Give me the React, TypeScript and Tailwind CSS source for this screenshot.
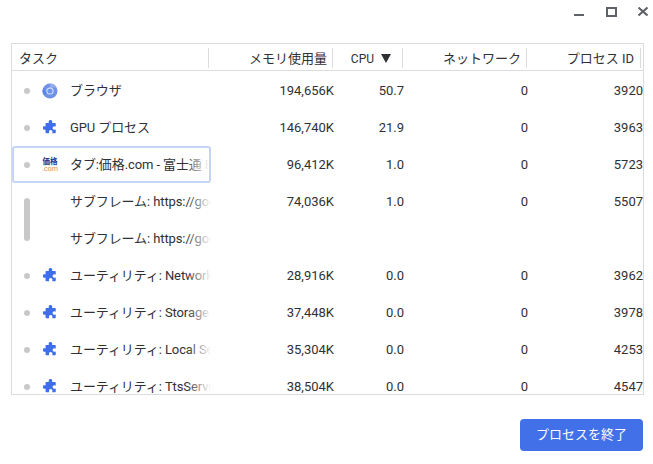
const font = { fontFamily: '"Roboto","Noto Sans CJK JP",sans-serif' };

function Puzzle() {
  return (
    <svg width="15" height="15" viewBox="0 0 16 16" className="ml-[1px] block">
      <path fill="#3f6fe8" d="M6 1.6a2 2 0 0 1 3.9 0c0 .5-.2.9-.2 1.5h3.2c.4 0 .7.3.7.7V7c-.6 0-1-.3-1.500-.3a1.900 1.900 0 0 0 0 3.800c.5 0 .9-.2 1.500-.3v3.200c0 .4-.3.7-.7.7H9.800c0-.6.3-1 .3-1.500a1.900 1.900 0 0 0-3.800 0c0 .5.2.9.3 1.500H3.400c-.4 0-.7-.3-.7-.7V10.300c-.5 0-.9.2-1.300.1a1.900 1.900 0 0 1 0-3.800c.4 0 .8.200 1.300.2V3.800c0-.4.3-.7.7-.7h2.800C6.200 2.500 6 2.100 6 1.600z" />
    </svg>
  );
}

function Chrome() {
  return (
    <svg width="16" height="16" viewBox="0 0 16 16" className="block">
      <circle cx="8" cy="8" r="7.500" fill="#6f92e8" />
      <path d="M8 .5A7.500 7.500 0 0 1 14.600 4.500H8z" fill="#93adec" />
      <path d="M1.500 4.500 5 10.500 2 12.500A7.500 7.500 0 0 1 1.500 4.500z" fill="#5f86e6" />
      <circle cx="8" cy="8" r="3.600" fill="#dfe7fa" />
      <circle cx="8" cy="8" r="2.600" fill="#6f94e8" />
    </svg>
  );
}

function Kakaku() {
  return (
    <div className="flex w-4 flex-col items-center leading-none">
      <span className="text-[7.500px] font-bold leading-[8px] text-[#2a3088]">価格</span>
      <span className="text-[7px] leading-[6px] text-[#d98a4a]">.com</span>
    </div>
  );
}

type Row = { icon: "chrome" | "puzzle" | "kakaku" | null; name: string; mem: string; cpu: string; net: string; pid: string; focus?: boolean };

const rows: Row[] = [
  { icon: "chrome", name: "ブラウザ", mem: "194,656K", cpu: "50.7", net: "0", pid: "3920" },
  { icon: "puzzle", name: "GPU プロセス", mem: "146,740K", cpu: "21.9", net: "0", pid: "3963" },
  { icon: "kakaku", name: "タブ:価格.com - 富士通 FMV", mem: "96,412K", cpu: "1.0", net: "0", pid: "5723", focus: true },
  { icon: null, name: "サブフレーム: https://google.com", mem: "74,036K", cpu: "1.0", net: "0", pid: "5507" },
  { icon: null, name: "サブフレーム: https://google.com", mem: "", cpu: "", net: "", pid: "" },
  { icon: "puzzle", name: "ユーティリティ: Network Service", mem: "28,916K", cpu: "0.0", net: "0", pid: "3962" },
  { icon: "puzzle", name: "ユーティリティ: Storage Service", mem: "37,448K", cpu: "0.0", net: "0", pid: "3978" },
  { icon: "puzzle", name: "ユーティリティ: Local Service", mem: "35,304K", cpu: "0.0", net: "0", pid: "4253" },
  { icon: "puzzle", name: "ユーティリティ: TtsService", mem: "38,504K", cpu: "0.0", net: "0", pid: "4547" },
];

function TableRow({ row }: { row: Row }) {
  return (
    <div className="flex h-[37px] shrink-0 items-center text-[13px] text-[#303134]">
      <div className={`relative flex h-[37px] w-[199px] shrink-0 items-center overflow-hidden rounded-[3px] ${row.focus ? "border-2 border-[#c3d4f5]" : ""}`}>
        <div className={`flex items-center ${row.focus ? "pl-[10px]" : "pl-3"}`}>
          <span className="h-[6px] w-[6px] shrink-0">
            {row.icon && <span className="block h-[6px] w-[6px] rounded-full bg-[#c8c8c8]" />}
          </span>
          <span className="ml-3 flex h-4 w-4 shrink-0 items-center justify-center">
            {row.icon === "chrome" && <Chrome />}
            {row.icon === "puzzle" && <Puzzle />}
            {row.icon === "kakaku" && <Kakaku />}
          </span>
          <span className="ml-3 whitespace-nowrap tracking-[-0.1px]">{row.name}</span>
        </div>
        <div className="absolute inset-y-0 right-0 w-6 bg-gradient-to-r from-transparent to-white" />
      </div>
      <div className="w-[123px] shrink-0 text-right">{row.mem}</div>
      <div className="w-[70px] shrink-0 text-right">{row.cpu}</div>
      <div className="w-[124px] shrink-0 text-right">{row.net}</div>
      <div className="w-[115px] shrink-0 text-right">{row.pid}</div>
    </div>
  );
}

export default function App() {
  return (
    <div className="flex h-[464px] w-[653px] flex-col overflow-hidden bg-white" style={font}>
      <div className="flex h-[43px] shrink-0 items-start justify-end gap-[21px] pr-[5px] pt-[7px]">
        <span className="mr-[1px] mt-[7px] block h-[2px] w-[10px] bg-[#5f6368]" />
        <span className="block h-[10px] w-[11px] border-2 border-[#5f6368]" />
        <svg width="10" height="9" viewBox="0 0 10 9" className="block">
          <path d="M.5.5l9 8M9.500.5l-9 8" stroke="#5f6368" strokeWidth="2" />
        </svg>
      </div>
      <div className="relative ml-[11px] h-[352px] w-[633px] shrink-0 overflow-hidden border border-[#dadce0]">
        <div className="flex h-[27px] items-start border-b border-[#dadce0] pt-[4px] text-[13px] text-[#303134]">
          <div className="flex h-[20px] w-[197px] shrink-0 items-center border-r border-[#dadce0] pl-[7px] pt-[2px]">タスク</div>
          <div className="flex h-[20px] w-[124px] shrink-0 items-center justify-end border-r border-[#dadce0] pr-[5px] pt-[2px]">メモリ使用量</div>
          <div className="flex h-[20px] w-[70px] shrink-0 items-center justify-end gap-[6px] border-r border-[#dadce0] pr-[11px] text-[12px]">
            <span className="-ml-[1px] mr-[1px] pt-[2px]">CPU</span>
            <svg width="10" height="9" viewBox="0 0 10 9" className="block">
              <path d="M0 0h10L5 9z" fill="#303134" />
            </svg>
          </div>
          <div className="flex h-[20px] w-[124px] shrink-0 items-center justify-end border-r border-[#dadce0] pr-[5px] pt-[2px]">ネットワーク</div>
          <div className="flex h-[20px] w-[114px] shrink-0 items-center justify-end border-r border-[#dadce0] pr-[6px] pt-[2px]">プロセス ID</div>
        </div>
        <div className="mt-[1px] flex flex-col">
          {rows.map((row, i) => (
            <TableRow key={i} row={row} />
          ))}
        </div>
        <div className="absolute left-[12px] top-[154px] h-[43px] w-[6px] rounded-[3px] bg-[#c8c8c8]" />
      </div>
      <div className="flex flex-1 items-start justify-end pr-[10px] pt-[24px]">
        <button className="flex h-8 w-[123px] items-center justify-center rounded-[4px] bg-[#4170e8] text-[13px] text-white">
          プロセスを終了
        </button>
      </div>
    </div>
  );
}
